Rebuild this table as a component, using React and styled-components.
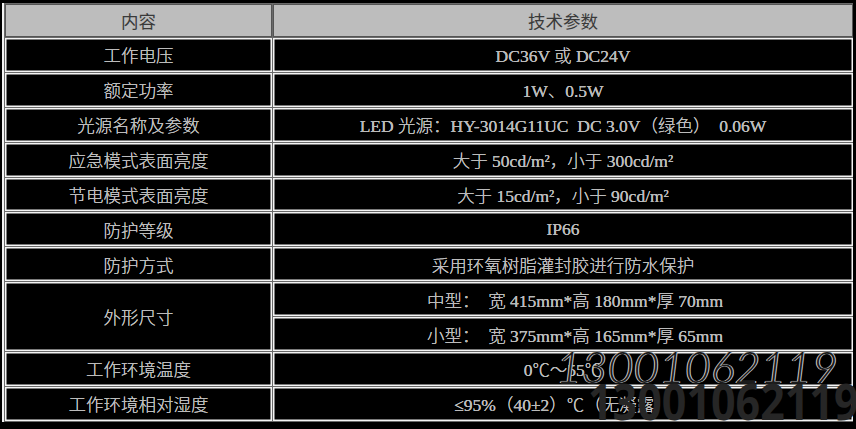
import React from "react";
import styled, { createGlobalStyle } from "styled-components";

const rows = [
  { name: "工作电压", value: "DC36V 或 DC24V" },
  { name: "额定功率", value: "1W、0.5W" },
  { name: "光源名称及参数", value: "LED 光源：HY-3014G11UC  DC 3.0V（绿色）  0.06W" },
  { name: "应急模式表面亮度", value: "大于 50cd/m²，小于 300cd/m²" },
  { name: "节电模式表面亮度", value: "大于 15cd/m²，小于 90cd/m²" },
  { name: "防护等级", value: "IP66" },
  { name: "防护方式", value: "采用环氧树脂灌封胶进行防水保护" },
];

const tail = [
  { name: "工作环境温度", value: "0℃～55℃" },
  { name: "工作环境相对湿度", value: "≤95%（40±2）℃（无凝露）" },
];

const GlobalStyle = createGlobalStyle`
  html, body {
    margin: 0;
    background: #000;
    overflow: hidden;
  }
`;

const Page = styled.div`
  position: relative;
  width: 856px;
  height: 429px;
  overflow: hidden;
`;

const Table = styled.div`
  display: grid;
  grid-template-columns: 267px 1fr;
  grid-template-rows: 33px repeat(11, 33.9px);
  gap: 1px;
  margin: 3px 3px 0 2px;
  border-left: 2px solid #f2f2f2;
  padding: 1px 0 1px 1px;
  background: #6a6a6a;
`;

const HeadCell = styled.div`
  display: flex;
  align-items: center;
  justify-content: center;
  background: #bdbdbd;
  box-shadow: inset 0 0 0 1px #555;
  color: #3a3a3a;
  font-family: "Liberation Serif", "Noto Sans CJK SC", serif;
  font-size: 17.5px;
`;

const Cell = styled.div`
  display: flex;
  align-items: center;
  justify-content: ${(p) => (p.$left ? "flex-start" : "center")};
  padding-left: ${(p) => (p.$left ? "154px" : "0")};
  background: #000;
  box-shadow: inset 0 0 0 1.5px #f4f4f4;
  color: #b8b8b8;
  text-shadow: 0 0 0.6px #fff;
  font-family: "Liberation Serif", "Noto Sans CJK SC", serif;
  font-weight: 300;
  font-size: 17.5px;
  white-space: pre;
  grid-row: ${(p) => (p.$span ? `span ${p.$span}` : "auto")};
`;

const OutlineMark = styled.div`
  position: absolute;
  left: 556px;
  top: 344px;
  font-family: Lato, "Liberation Sans", sans-serif;
  font-style: italic;
  font-weight: 300;
  font-size: 44px;
  line-height: 1;
  color: #1c1c1c;
  text-shadow: 0 0 1px #eee, 1px 0 0 #bbb, -1px 0 0 #bbb;
  letter-spacing: 0.3px;
`;

const BoldMark = styled.div`
  position: absolute;
  left: 588px;
  top: 376px;
  font-family: "Noto Sans", "Open Sans", sans-serif;
  font-weight: 700;
  font-size: 50px;
  line-height: 1;
  color: #262626;
  transform: scaleX(0.86);
  transform-origin: left top;
`;

export default function App() {
  return (
    <Page>
      <GlobalStyle />
      <Table>
        <HeadCell>内容</HeadCell>
        <HeadCell>技术参数</HeadCell>
        {rows.map((r) => (
          <React.Fragment key={r.name}>
            <Cell>{r.name}</Cell>
            <Cell>{r.value}</Cell>
          </React.Fragment>
        ))}
        <Cell $span={2}>外形尺寸</Cell>
        <Cell $left>中型：  宽 415mm*高 180mm*厚 70mm</Cell>
        <Cell $left>小型：  宽 375mm*高 165mm*厚 65mm</Cell>
        {tail.map((r) => (
          <React.Fragment key={r.name}>
            <Cell>{r.name}</Cell>
            <Cell>{r.value}</Cell>
          </React.Fragment>
        ))}
      </Table>
      <OutlineMark>13001062119</OutlineMark>
      <BoldMark>13001062119</BoldMark>
    </Page>
  );
}
